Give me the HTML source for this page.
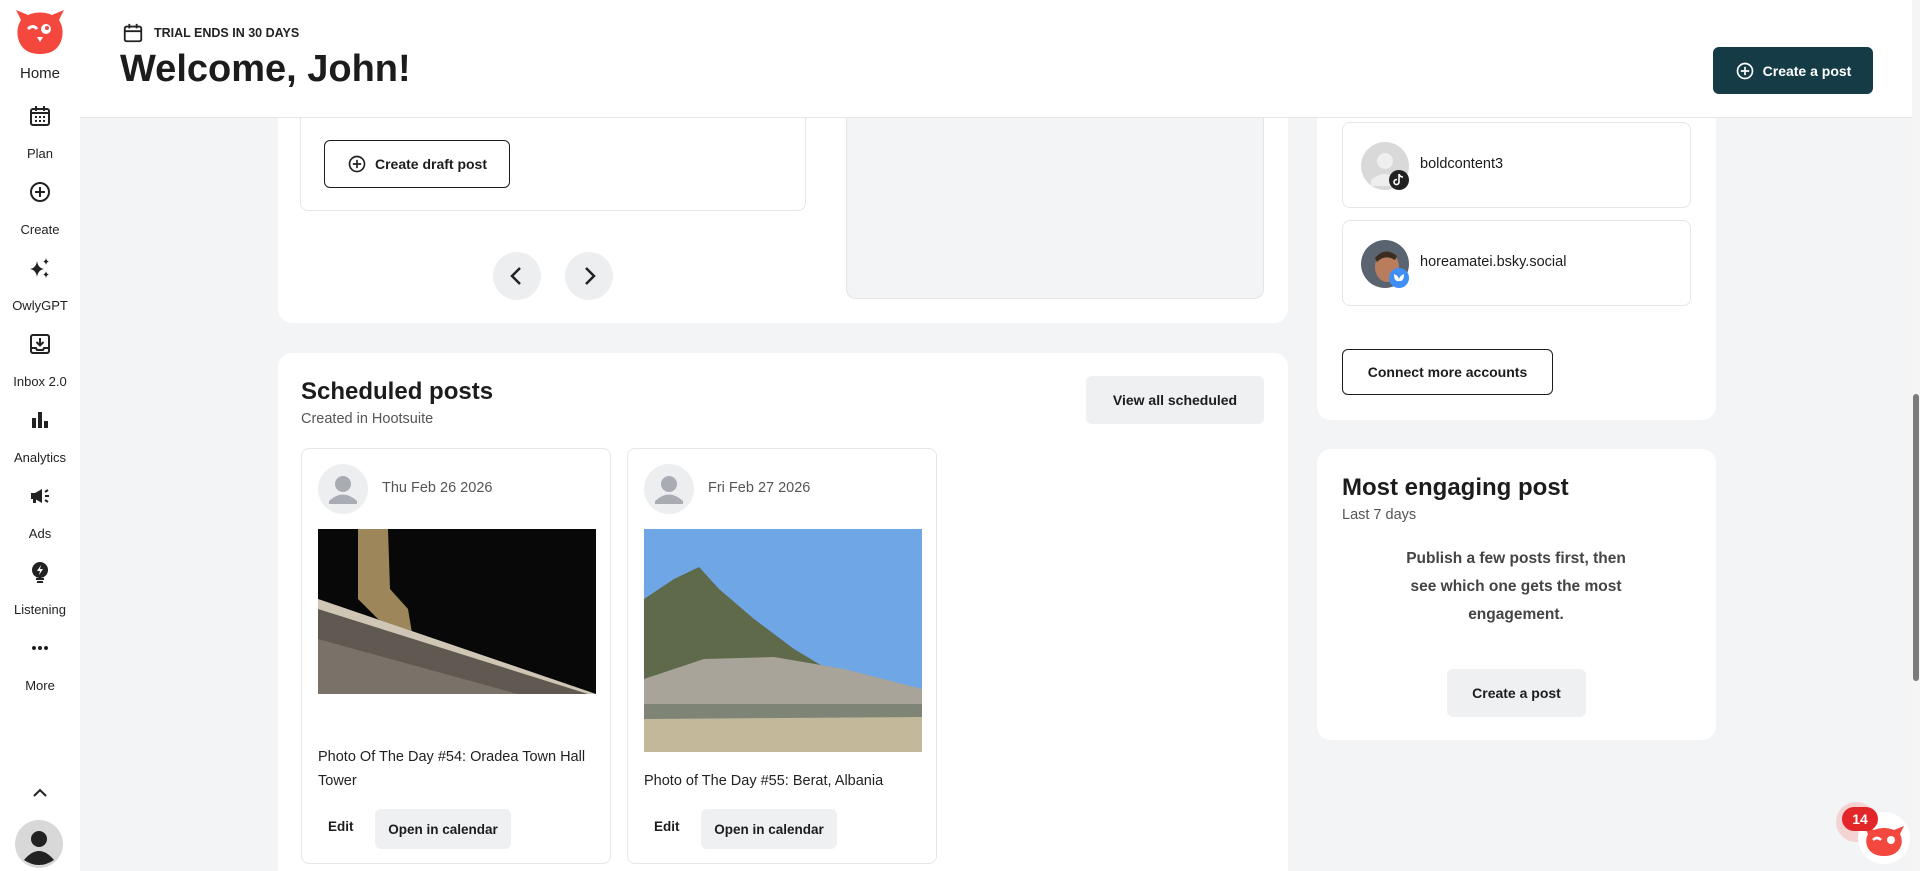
<!DOCTYPE html>
<html><head><meta charset="utf-8"><style>
*{box-sizing:border-box;margin:0;padding:0}
html,body{width:1920px;height:871px;overflow:hidden}
body{background:#f3f4f6;font-family:"Liberation Sans",sans-serif;color:#1c1c1c;position:relative}
.abs{position:absolute}
.side{left:0;top:0;width:80px;height:871px;background:#fff}
.nav{position:absolute;left:0;width:80px;text-align:center;font-size:13px;color:#222}
.ico{position:absolute;left:28px;width:24px;height:24px}
.hdr{left:80px;top:0;width:1832px;height:118px;background:#fff;border-bottom:1px solid #e6e6e6;z-index:5}
.card{background:#fff;border-radius:14px;position:absolute}
.btn{position:absolute;display:flex;align-items:center;justify-content:center;font-weight:bold;font-size:14px;border-radius:6px}
.out{border:1.5px solid #1c1c1c;background:#fff}
.gray{background:#eef0f2}
.post{position:absolute;background:#fff;border:1px solid #e6e6e6;border-radius:8px}
.acc{position:absolute;left:1342px;width:349px;height:86px;border:1px solid #e6e6e6;border-radius:8px;background:#fff}
</style></head><body>
<div class="abs side">
 <svg class="abs" style="left:14px;top:6px" width="52" height="50" viewBox="0 0 52 50"><path d="M2 4 L14 9 Q26 4 38 9 L50 4 L45 14 Q50 22 48 32 Q44 48 26 48 Q8 48 4 32 Q2 22 7 14 Z" fill="#f4473e"/><circle cx="32" cy="23" r="5" fill="#fff"/><circle cx="33" cy="22" r="2" fill="#f4473e"/><path d="M14 23 Q19 18 23 23" stroke="#fff" stroke-width="3" fill="none"/><path d="M23 31 L26 36 L29 31 Z" fill="#fff"/></svg>
 <div class="nav" style="top:65px;font-size:15px">Home</div>
 <svg class="ico" style="top:104px" viewBox="0 0 24 24"><rect x="3" y="5" width="18" height="16" rx="2" fill="none" stroke="#222" stroke-width="2"/><path d="M3 9h18M8 2v5M16 2v5" stroke="#222" stroke-width="2"/><g fill="#222"><rect x="7" y="12" width="2" height="2"/><rect x="11" y="12" width="2" height="2"/><rect x="15" y="12" width="2" height="2"/><rect x="7" y="16" width="2" height="2"/><rect x="11" y="16" width="2" height="2"/><rect x="15" y="16" width="2" height="2"/></g></svg>
 <div class="nav" style="top:146px">Plan</div>
 <svg class="ico" style="top:180px" viewBox="0 0 24 24"><circle cx="12" cy="12" r="9" fill="none" stroke="#222" stroke-width="2"/><path d="M12 7v10M7 12h10" stroke="#222" stroke-width="2"/></svg>
 <div class="nav" style="top:222px">Create</div>
 <svg class="ico" style="top:256px" viewBox="0 0 24 24" fill="#222"><path d="M9 5 Q10 12 16 13 Q10 14 9 21 Q8 14 2 13 Q8 12 9 5Z"/><path d="M18 2 Q18.5 5 21 5.5 Q18.5 6 18 9 Q17.5 6 15 5.5 Q17.5 5 18 2Z"/><path d="M18 15 Q18.5 18 21 18.5 Q18.5 19 18 22 Q17.5 19 15 18.5 Q17.5 18 18 15Z"/></svg>
 <div class="nav" style="top:298px">OwlyGPT</div>
 <svg class="ico" style="top:332px" viewBox="0 0 24 24"><rect x="3" y="3" width="18" height="18" rx="2" fill="none" stroke="#222" stroke-width="2"/><path d="M12 6v7M8.5 10l3.5 3.5 3.5-3.5M3 16h5l1 2h6l1-2h5" stroke="#222" stroke-width="2" fill="none"/></svg>
 <div class="nav" style="top:374px">Inbox 2.0</div>
 <svg class="ico" style="top:408px" viewBox="0 0 24 24" fill="#222"><rect x="4" y="10" width="4" height="10"/><rect x="10" y="4" width="4" height="16"/><rect x="16" y="13" width="4" height="7"/></svg>
 <div class="nav" style="top:450px">Analytics</div>
 <svg class="ico" style="top:484px" viewBox="0 0 24 24" fill="#222"><path d="M3 9h4l7-4v14l-7-4H3z"/><rect x="5" y="15" width="3" height="4"/><path d="M17 8l3-2M17 12h4M17 16l3 2" stroke="#222" stroke-width="2"/></svg>
 <div class="nav" style="top:526px">Ads</div>
 <svg class="ico" style="top:560px" viewBox="0 0 24 24"><circle cx="12" cy="10" r="8" fill="#222"/><path d="M13 5l-4 6h3l-1 4 4-6h-3z" fill="#fff"/><path d="M8 19h8M9 22h6" stroke="#222" stroke-width="2"/></svg>
 <div class="nav" style="top:602px">Listening</div>
 <svg class="ico" style="top:636px" viewBox="0 0 24 24" fill="#222"><circle cx="6" cy="12" r="2"/><circle cx="12" cy="12" r="2"/><circle cx="18" cy="12" r="2"/></svg>
 <div class="nav" style="top:678px">More</div>
 <svg class="abs" style="left:31px;top:786px" width="18" height="14" viewBox="0 0 18 14"><path d="M3 10l6-6 6 6" stroke="#222" stroke-width="2" fill="none"/></svg>
 <svg class="abs" style="left:15px;top:820px" width="48" height="48" viewBox="0 0 48 48"><circle cx="24" cy="24" r="24" fill="#d8d8d8"/><circle cx="24" cy="19" r="8" fill="#222"/><path d="M9 40 Q24 22 39 40 Q24 50 9 40Z" fill="#222"/></svg>
</div>

<div class="abs hdr">
 <svg class="abs" style="left:42px;top:22px" width="22" height="22" viewBox="0 0 24 24"><rect x="3" y="5" width="18" height="16" rx="2" fill="none" stroke="#222" stroke-width="2"/><path d="M3 10h18M8 2v5M16 2v5" stroke="#222" stroke-width="2"/></svg>
 <div class="abs" style="left:74px;top:26px;font-size:12.5px;font-weight:bold;color:#222">TRIAL ENDS IN 30 DAYS</div>
 <div class="abs" style="left:40px;top:48px;font-size:38px;font-weight:bold;color:#1c1c1c">Welcome, John!</div>
 <div class="btn" style="left:1633px;top:47px;width:160px;height:47px;background:#143b46;color:#fff;font-size:14px"><svg width="20" height="20" viewBox="0 0 24 24" style="margin-right:8px"><circle cx="12" cy="12" r="9" fill="none" stroke="#fff" stroke-width="2"/><path d="M12 7v10M7 12h10" stroke="#fff" stroke-width="2"/></svg>Create a post</div>
</div>

<div class="card" style="left:278px;top:80px;width:1010px;height:243px"></div>
<div class="abs" style="left:300px;top:100px;width:506px;height:111px;border:1px solid #e6e6e6;border-top:none;border-radius:0 0 8px 8px;background:#fff"></div>
<div class="btn out" style="left:324px;top:140px;width:186px;height:48px"><svg width="20" height="20" viewBox="0 0 24 24" style="margin-right:8px"><circle cx="12" cy="12" r="9" fill="none" stroke="#222" stroke-width="2"/><path d="M12 7v10M7 12h10" stroke="#222" stroke-width="2"/></svg>Create draft post</div>
<svg class="abs" style="left:493px;top:252px" width="48" height="48" viewBox="0 0 48 48"><circle cx="24" cy="24" r="24" fill="#eceef0"/><path d="M27 16l-8 8 8 8" stroke="#222" stroke-width="2.5" fill="none"/></svg>
<svg class="abs" style="left:565px;top:252px" width="48" height="48" viewBox="0 0 48 48"><circle cx="24" cy="24" r="24" fill="#eceef0"/><path d="M21 16l8 8-8 8" stroke="#222" stroke-width="2.5" fill="none"/></svg>
<div class="abs" style="left:846px;top:100px;width:418px;height:199px;background:#f3f4f6;border:1px solid #e4e4e4;border-top:none;border-radius:0 0 10px 10px"></div>

<div class="card" style="left:278px;top:353px;width:1010px;height:530px"></div>
<div class="abs" style="left:301px;top:378px;font-size:24px;font-weight:bold">Scheduled posts</div>
<div class="abs" style="left:301px;top:411px;font-size:14.5px;color:#555">Created in Hootsuite</div>
<div class="btn gray" style="left:1086px;top:376px;width:178px;height:48px;font-size:14px">View all scheduled</div>

<div class="post" style="left:301px;top:448px;width:310px;height:416px">
 <svg class="abs" style="left:16px;top:15px" width="50" height="50" viewBox="0 0 50 50"><circle cx="25" cy="25" r="25" fill="#eceef0"/><circle cx="25" cy="20" r="8" fill="#a9adb3"/><path d="M11 37 Q25 24 39 37 L39 40 L11 40Z" fill="#a9adb3"/></svg>
 <div class="abs" style="left:80px;top:31px;font-size:14.5px;color:#555">Thu Feb 26 2026</div>
 <svg class="abs" style="left:16px;top:80px" width="278" height="165" viewBox="0 0 278 165"><rect width="278" height="165" fill="#080808"/><path d="M40 0 L70 0 L72 60 L90 80 L95 110 L60 90 L40 70Z" fill="#9c865a"/><path d="M0 70 L278 165 L0 165Z" fill="#5f5952"/><path d="M0 70 L278 165 L270 165 L0 80Z" fill="#cfc6b5"/><path d="M0 110 L200 165 L0 165Z" fill="#7a7268"/></svg>
 <div class="abs" style="left:16px;top:296px;width:285px;font-size:14.5px;line-height:24px;color:#222">Photo Of The Day #54: Oradea Town Hall Tower</div>
 <div class="abs" style="left:26px;top:370px;font-size:13.5px;font-weight:bold">Edit</div>
 <div class="btn gray" style="left:73px;top:360px;width:136px;height:40px;font-size:13.5px">Open in calendar</div>
</div>
<div class="post" style="left:627px;top:448px;width:310px;height:416px">
 <svg class="abs" style="left:16px;top:15px" width="50" height="50" viewBox="0 0 50 50"><circle cx="25" cy="25" r="25" fill="#eceef0"/><circle cx="25" cy="20" r="8" fill="#a9adb3"/><path d="M11 37 Q25 24 39 37 L39 40 L11 40Z" fill="#a9adb3"/></svg>
 <div class="abs" style="left:80px;top:31px;font-size:14.5px;color:#555">Fri Feb 27 2026</div>
 <svg class="abs" style="left:16px;top:80px" width="278" height="223" viewBox="0 0 278 223"><rect width="278" height="223" fill="#6ea6e6"/><path d="M0 70 L30 50 L55 38 L75 60 L110 90 L150 120 L200 150 L278 170 L278 223 L0 223Z" fill="#5f6a4a"/><path d="M0 150 L60 130 L130 128 L200 140 L278 160 L278 190 L0 190Z" fill="#a9a49a"/><path d="M0 175 L278 175 L278 190 L0 190Z" fill="#7e8577"/><path d="M0 190 L278 188 L278 223 L0 223Z" fill="#c3b89a"/></svg>
 <div class="abs" style="left:16px;top:320px;width:285px;font-size:14.5px;line-height:24px;color:#222">Photo of The Day #55: Berat, Albania</div>
 <div class="abs" style="left:26px;top:370px;font-size:13.5px;font-weight:bold">Edit</div>
 <div class="btn gray" style="left:73px;top:360px;width:136px;height:40px;font-size:13.5px">Open in calendar</div>
</div>

<div class="card" style="left:1317px;top:80px;width:399px;height:340px"></div>
<div class="acc" style="top:122px">
 <svg class="abs" style="left:18px;top:19px" width="50" height="50" viewBox="0 0 50 50"><circle cx="24" cy="24" r="24" fill="#d9d9d9"/><circle cx="24" cy="19" r="8" fill="#eee"/><path d="M10 38 Q24 26 38 38 L38 44 L10 44Z" fill="#eee"/><circle cx="38" cy="38" r="10" fill="#222"/><path d="M38 32v8a2.5 2.5 0 1 1-2-2.4M38 32q1 3 4 3" stroke="#fff" stroke-width="1.6" fill="none"/></svg>
 <div class="abs" style="left:77px;top:33px;font-size:14.5px">boldcontent3</div>
</div>
<div class="acc" style="top:220px">
 <svg class="abs" style="left:18px;top:19px" width="50" height="50" viewBox="0 0 50 50"><circle cx="24" cy="24" r="24" fill="#5a6470"/><ellipse cx="26" cy="27" rx="12" ry="15" fill="#b97d5e"/><path d="M14 18 Q24 6 36 16 L34 20 Q24 14 16 22Z" fill="#3b2c22"/><circle cx="38" cy="38" r="10" fill="#3f8ef5"/><path d="M33 34 Q38 36 38 40 Q38 36 43 34 Q43 42 38 41 Q33 42 33 34Z" fill="#fff"/></svg>
 <div class="abs" style="left:77px;top:33px;font-size:14.5px">horeamatei.bsky.social</div>
</div>
<div class="btn out" style="left:1342px;top:349px;width:211px;height:46px;font-size:14px">Connect more accounts</div>

<div class="card" style="left:1317px;top:449px;width:399px;height:291px"></div>
<div class="abs" style="left:1342px;top:474px;font-size:24px;font-weight:bold">Most engaging post</div>
<div class="abs" style="left:1342px;top:507px;font-size:14.5px;color:#555">Last 7 days</div>
<div class="abs" style="left:1396px;top:545px;width:240px;text-align:center;font-size:15.5px;line-height:28px;color:#444;font-weight:bold">Publish a few posts first, then see which one gets the most engagement.</div>
<div class="btn gray" style="left:1447px;top:669px;width:139px;height:48px;font-size:14px">Create a post</div>

<div class="abs" style="left:1912px;top:0;width:8px;height:871px;background:#f5f5f5"></div>
<div class="abs" style="left:1913px;top:394px;width:6px;height:287px;background:#7b7b7b;border-radius:3px"></div>

<div class="abs" style="left:1836px;top:802px;width:40px;height:40px;border-radius:50%;background:#f4d3d3"></div>
<svg class="abs" style="left:1856px;top:810px" width="56" height="56" viewBox="0 0 56 56"><circle cx="28" cy="28" r="26" fill="#fff"/><path d="M8 16 L18 20 Q28 16 38 20 L48 16 L44 24 Q47 30 45 36 Q41 46 28 46 Q15 46 11 36 Q9 30 12 24Z" fill="#f4473e"/><circle cx="35" cy="30" r="4" fill="#fff"/><path d="M17 30 Q21 26 25 30" stroke="#fff" stroke-width="2.5" fill="none"/></svg>
<div class="abs" style="left:1842px;top:807px;width:36px;height:24px;border-radius:12px;background:#e3262a;color:#fff;font-size:14px;font-weight:bold;text-align:center;line-height:24px">14</div>
</body></html>
